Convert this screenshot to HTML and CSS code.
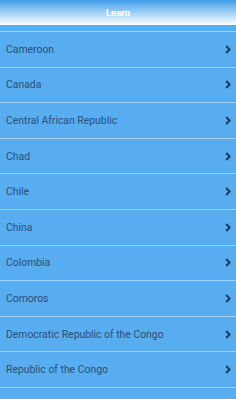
FILE: index.html
```html
<!DOCTYPE html>
<html>
<head>
<meta charset="utf-8">
<link rel="stylesheet" href="styles.css">
</head>
<body>
<div class="header"><span class="title">Learn</span></div>
<ul class="list">
  <li class="row"><span>Cameroon</span><svg class="chev" viewBox="0 0 6 9"><path d="M1.2 1 L4.6 4.5 L1.2 8"/></svg></li>
  <li class="row"><span>Canada</span><svg class="chev" viewBox="0 0 6 9"><path d="M1.2 1 L4.6 4.5 L1.2 8"/></svg></li>
  <li class="row"><span>Central African Republic</span><svg class="chev" viewBox="0 0 6 9"><path d="M1.2 1 L4.6 4.5 L1.2 8"/></svg></li>
  <li class="row"><span>Chad</span><svg class="chev" viewBox="0 0 6 9"><path d="M1.2 1 L4.6 4.5 L1.2 8"/></svg></li>
  <li class="row"><span>Chile</span><svg class="chev" viewBox="0 0 6 9"><path d="M1.2 1 L4.6 4.5 L1.2 8"/></svg></li>
  <li class="row"><span>China</span><svg class="chev" viewBox="0 0 6 9"><path d="M1.2 1 L4.6 4.5 L1.2 8"/></svg></li>
  <li class="row"><span>Colombia</span><svg class="chev" viewBox="0 0 6 9"><path d="M1.2 1 L4.6 4.5 L1.2 8"/></svg></li>
  <li class="row"><span>Comoros</span><svg class="chev" viewBox="0 0 6 9"><path d="M1.2 1 L4.6 4.5 L1.2 8"/></svg></li>
  <li class="row"><span>Democratic Republic of the Congo</span><svg class="chev" viewBox="0 0 6 9"><path d="M1.2 1 L4.6 4.5 L1.2 8"/></svg></li>
  <li class="row"><span>Republic of the Congo</span><svg class="chev" viewBox="0 0 6 9"><path d="M1.2 1 L4.6 4.5 L1.2 8"/></svg></li>
</ul>
</body>
</html>
```
FILE: styles.css
```css
html, body {
  margin: 0;
  padding: 0;
  height: 100%;
  background: #58acf0;
  overflow: hidden;
}
body {
  font-family: Roboto, "Liberation Sans", sans-serif;
}
.header {
  height: 25px;
  background: linear-gradient(to bottom, #3e9ce8 0%, #8cc6f3 40%, #ffffff 100%);
  display: flex;
  align-items: center;
  justify-content: center;
}
.title {
  color: #ffffff;
  font-weight: bold;
  font-size: 9.5px;
  margin-top: -1px;
}
.list {
  list-style: none;
  margin: 0;
  padding: 6px 0 0 0;
  border-bottom: 1px solid #9ed0f7;
}
.row {
  height: 34.6px;
  border-top: 1px solid #9ed0f7;
  display: flex;
  align-items: center;
  justify-content: space-between;
  padding: 0 5px 0 6px;
  color: #2c4f74;
  font-size: 10.4px;
}
.chev {
  width: 6px;
  height: 9px;
  fill: none;
  stroke: #1e3a5e;
  stroke-width: 1.9;
}
```
